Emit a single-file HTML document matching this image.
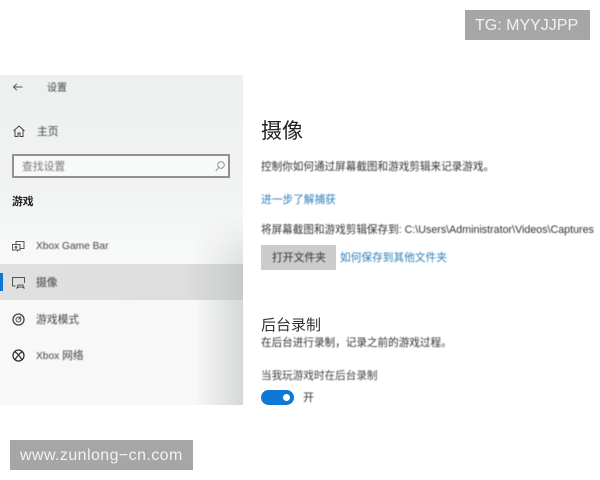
<!DOCTYPE html>
<html><head><meta charset="utf-8">
<style>
html,body{margin:0;padding:0;background:#fff}
#p{position:relative;width:600px;height:480px;overflow:hidden;background:#fff;font-family:"Liberation Sans","Noto Sans CJK SC",sans-serif;color:#333}
.t{position:absolute;white-space:nowrap;line-height:1}
svg{position:absolute;overflow:visible}
.b{filter:blur(.4px)}
</style></head><body><div id="p">
<div style="position:absolute;left:465px;top:10px;width:125px;height:30px;background:#a6a6a6"></div>
<div class="t" style="left:475px;top:18px;font-size:16px;color:#f2f2f2">TG: MYYJJPP</div>
<div style="position:absolute;left:10px;top:440px;width:183px;height:30px;background:#a6a6a6"></div>
<div class="t" style="left:20px;top:448px;font-size:16px;color:#f2f2f2;letter-spacing:.42px">www.zunlong−cn.com</div>

<div style="position:absolute;left:0;top:75px;width:243px;height:330px;background:linear-gradient(180deg,#eef0f0 0,#f1f3f3 35%,#f7f8f8 50%,#f8f8f8 100%)"></div>
<div style="position:absolute;left:195px;top:215px;width:48px;height:190px;background:linear-gradient(90deg,rgba(205,208,208,0) 0,rgba(205,208,208,.8) 100%);-webkit-mask-image:linear-gradient(180deg,transparent 0,#000 35%,#000 100%);mask-image:linear-gradient(180deg,transparent 0,#000 35%,#000 100%)"></div>
<div style="position:absolute;left:0;top:264px;width:243px;height:36px;background:linear-gradient(90deg,#e0e0e0 0,#dedede 75%,#c8caca 100%)"></div>
<div style="position:absolute;left:0;top:273px;width:3px;height:18px;background:#0f78d4"></div>

<svg style="left:13px;top:83px" width="10" height="8" fill="none" stroke="#555" stroke-width="1"><path d="M.5 4H9.500M3.800 .8L.5 4l3.300 3.200"/></svg>
<div class="t b" style="left:47px;top:84px;font-size:10px;color:#444">设置</div>

<svg style="left:13px;top:125px" width="12" height="12" fill="none" stroke="#444" stroke-width="1"><path d="M.5 6L6 1l5.500 5M2 5v6.500h3V8h2v3.500h3V5"/></svg>
<div class="t b" style="left:37px;top:127px;font-size:10.800px;color:#444">主页</div>

<div style="position:absolute;left:12px;top:154px;width:214px;height:20px;border:2px solid #919191;background:#f8f9f9"></div>
<div class="t b" style="left:22px;top:162px;font-size:10.800px;color:#777">查找设置</div>
<svg style="left:215px;top:161px" width="10" height="11" fill="none" stroke="#888" stroke-width=".9"><circle cx="6" cy="4" r="3.300"/><path d="M3.700 6.500L.7 10"/></svg>

<div class="t" style="left:12px;top:197px;font-size:10.800px;font-weight:700;color:#222">游戏</div>

<svg style="left:12px;top:240px" width="13" height="12" fill="none" stroke="#555" stroke-width="1"><path d="M.5 4.500h7.500v5.500H.5zM4 4.500V1.500h8v7H8M5.500 10v1.500"/><circle cx="4" cy="7.300" r=".9"/></svg>
<div class="t b" style="left:36px;top:242px;font-size:10.200px;color:#444">Xbox Game Bar</div>

<svg style="left:12px;top:277px" width="13" height="12" fill="none" stroke="#555" stroke-width="1"><path d="M3.500 9H.5V.5h12V6M5 11l1-3h5l1 3-2-1H7z"/></svg>
<div class="t b" style="left:36px;top:278px;font-size:10.800px;color:#444">摄像</div>

<svg style="left:12px;top:313px" width="13" height="13" fill="none" stroke="#444"><circle cx="6.500" cy="6.500" r="5.500" stroke-width="1.300"/><circle cx="6.500" cy="6.500" r="2.500" stroke-width="1"/><path d="M6.500 6.500L9 3.500" stroke-width="1"/></svg>
<div class="t b" style="left:36px;top:315px;font-size:10.800px;color:#444">游戏模式</div>

<svg style="left:12px;top:349px" width="13" height="13" fill="none" stroke="#333"><circle cx="6.500" cy="6.500" r="5.500" stroke-width="1.300"/><path d="M2.800 2.800C5 3.800 8.500 8 10 10.800M10.200 2.800C8 3.800 4.500 8 3 10.800" stroke-width="1.300"/></svg>
<div class="t b" style="left:36px;top:351px;font-size:10.200px;color:#444">Xbox <span style="font-size:10.800px">网络</span></div>

<div class="t" style="left:261px;top:121px;font-size:21px;color:#222">摄像</div>
<div class="t b" style="left:261px;top:162px;font-size:10.600px;color:#333">控制你如何通过屏幕截图和游戏剪辑来记录游戏。</div>
<div class="t b" style="left:261px;top:195px;font-size:10.700px;color:#2a7fbd">进一步了解捕获</div>
<div class="t b" style="left:261px;top:225px;font-size:10.600px;color:#333">将屏幕截图和游戏剪辑保存到: <span style="font-size:10.700px">C:\Users\Administrator\Videos\Captures</span></div>
<div style="position:absolute;left:261px;top:245px;width:75px;height:25px;background:#ccc"></div>
<div class="t b" style="left:272px;top:253px;font-size:10.800px;color:#333">打开文件夹</div>
<div class="t b" style="left:340px;top:253px;font-size:10.700px;color:#2a7fbd">如何保存到其他文件夹</div>

<div class="t" style="left:261px;top:318px;font-size:15px;color:#333">后台录制</div>
<div class="t b" style="left:261px;top:338px;font-size:10.600px;color:#333">在后台进行录制，记录之前的游戏过程。</div>
<div class="t b" style="left:261px;top:371px;font-size:10.600px;color:#444">当我玩游戏时在后台录制</div>
<div style="position:absolute;left:261px;top:390px;width:33px;height:15px;border-radius:8px;background:#0f78d4"></div>
<div style="position:absolute;left:283px;top:394px;width:7px;height:7px;border-radius:50%;background:#fff"></div>
<div class="t b" style="left:303px;top:393px;font-size:11px;color:#333">开</div>
</div></body></html>
